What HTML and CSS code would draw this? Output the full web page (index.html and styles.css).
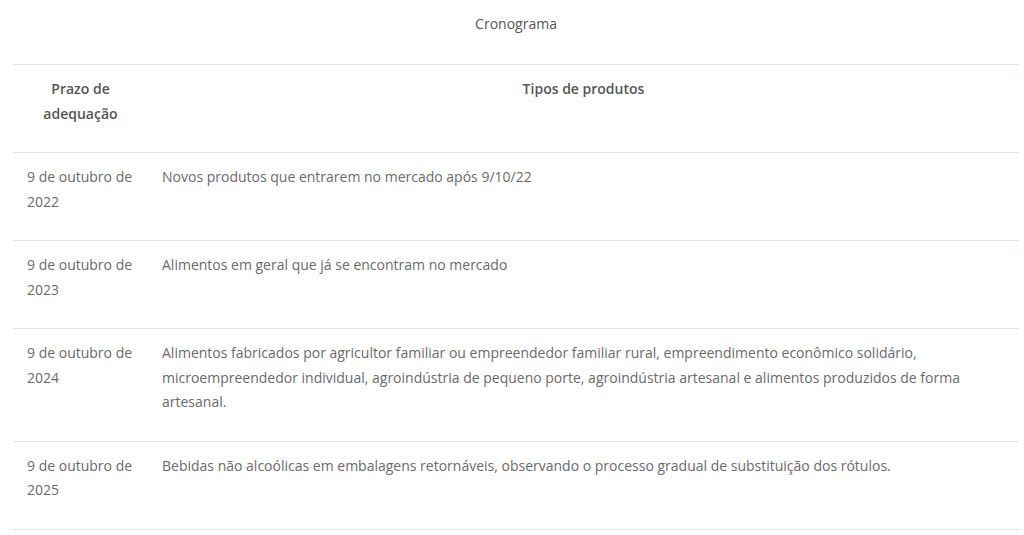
FILE: index.html
```html
<!DOCTYPE html>
<html lang="pt">
<head>
<meta charset="utf-8">
<link rel="stylesheet" href="styles.css">
</head>
<body>
<div class="wrap">
<table class="crono">
  <caption>Cronograma</caption>
  <thead>
    <tr><th class="c1">Prazo de adequação</th><th class="c2">Tipos de produtos</th></tr>
  </thead>
  <tbody>
    <tr><td class="c1">9 de outubro de 2022</td><td class="c2">Novos produtos que entrarem no mercado após 9/10/22</td></tr>
    <tr><td class="c1">9 de outubro de 2023</td><td class="c2">Alimentos em geral que já se encontram no mercado</td></tr>
    <tr><td class="c1">9 de outubro de 2024</td><td class="c2">Alimentos fabricados por agricultor familiar ou empreendedor familiar rural, empreendimento econômico solidário, microempreendedor individual, agroindústria de pequeno porte, agroindústria artesanal e alimentos produzidos de forma artesanal.</td></tr>
    <tr><td class="c1">9 de outubro de 2025</td><td class="c2">Bebidas não alcoólicas em embalagens retornáveis, observando o processo gradual de substituição dos rótulos.</td></tr>
  </tbody>
</table>
</div>
</body>
</html>
```
FILE: styles.css
```css
html, body { margin: 0; padding: 0; background: #fff; }
body {
  font-family: "Open Sans", "Liberation Sans", sans-serif;
  font-size: 14px;
  line-height: 24px;
  color: #6a6a6a;
}
.wrap { padding: 0 5px 0 13px; }
.crono {
  width: 1006px;
  border-collapse: collapse;
  table-layout: fixed;
}
.crono caption {
  padding: 12px 0 28px;
  color: #555;
  font-weight: 500;
  line-height: 24px;
}
.crono th, .crono td {
  border-top: 1px solid #dbe4f0;
  border-bottom: 1px solid #dbe4f0;
  padding: 12px 14px 26px;
  line-height: 24.5px;
  vertical-align: top;
}
.crono th {
  font-weight: 600;
  color: #555;
  text-align: center;
}
.crono td { text-align: left; }
.crono .c1 { width: 107px; }
```
